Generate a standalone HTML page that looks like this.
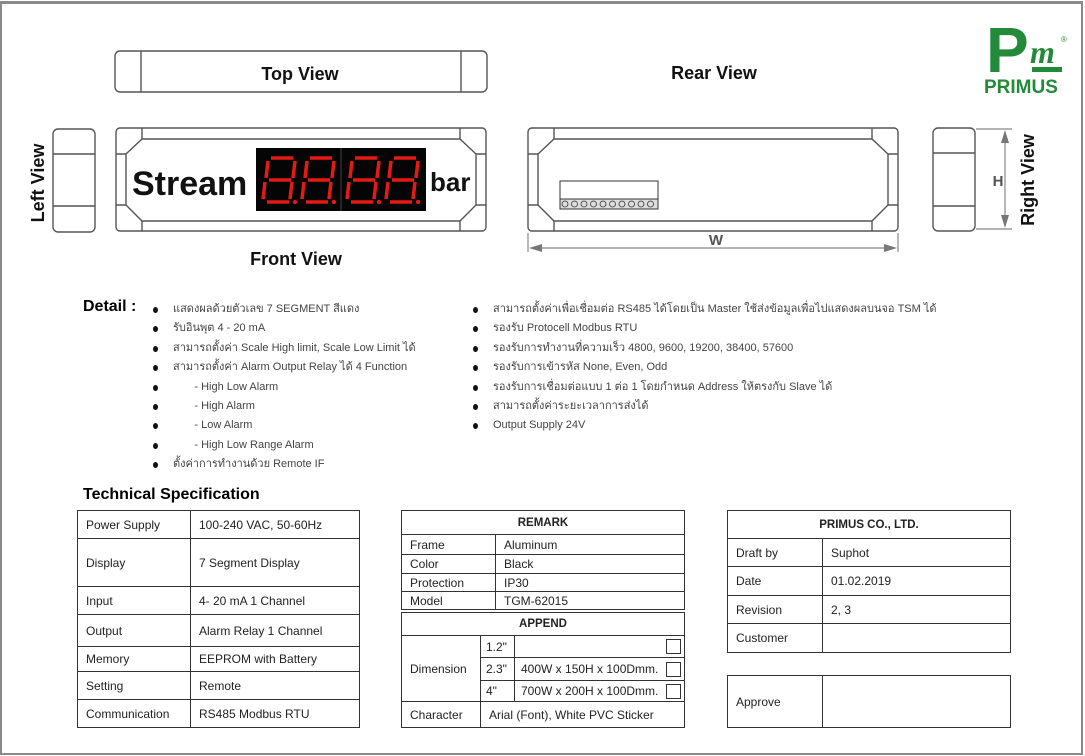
<!DOCTYPE html>
<html><head><meta charset="utf-8">
<style>
*{margin:0;padding:0;box-sizing:border-box}
body{width:1085px;height:756px;background:#fff;position:relative;overflow:hidden;font-family:"Liberation Sans",Arial,sans-serif;color:#111}
.frame{position:absolute;left:0;top:1px;width:1083px;height:754px;border:2px solid #8a8a8a;border-top-width:3px}
svg{position:absolute;left:0;top:0}
.det{position:absolute;font-size:11px;color:#444;line-height:19.4px;font-family:"Liberation Sans","DejaVu Sans",sans-serif}
.det div{position:relative;height:19.4px;white-space:nowrap}
.det div:before{content:"";position:absolute;left:-20px;top:7px;width:5px;height:6px;border-radius:50%;background:#111}
h3{position:absolute;font-size:16px;font-weight:bold;color:#000}
table{position:absolute;border-collapse:collapse;font-size:12px;color:#222}
td{border:1px solid #333;padding:0 0 0 8px;vertical-align:middle;white-space:nowrap}
.c{text-align:center;padding:0;font-weight:bold;font-size:11.5px}
.box{display:inline-block;width:15px;height:15px;border:1px solid #333;float:right;margin-right:3px}
</style></head><body>
<div class="frame"></div>
<svg width="1085" height="300" viewBox="0 0 1085 300">
<defs>
<g id="dig" fill="none" stroke="#e41b13" stroke-width="3.5">
<path d="M8 2H30M32 5L30 22M29 26L27 43M4 46H26M2 26L0 43M5 5L3 22M6 24H28"/>
<circle cx="32" cy="46" r="2.2" fill="#e41b13" stroke="none"/>
</g>
</defs>
<g fill="none" stroke="#555" stroke-width="1.4">
<rect x="115" y="51" width="372" height="41" rx="5"/>
<path d="M141 51V92M461 51V92"/>
<rect x="53" y="129" width="42" height="103" rx="5"/>
<path d="M53 154H95M53 206H95"/>
<rect x="933" y="128" width="42" height="103" rx="5"/>
<path d="M933 153H975M933 206H975"/>
<rect x="116" y="128" width="370" height="103" rx="4"/>
<path d="M142 139H460L476 154V205L460 221H142L126 205V154Z"/>
<path d="M142 128V139M116 154H126M460 128V139M476 154H486M116 205H126M142 221V231M476 205H486M460 221V231"/>
<rect x="528" y="128" width="370" height="103" rx="4"/>
<path d="M554 139H872L888 154V205L872 221H554L538 205V154Z"/>
<path d="M554 128V139M528 154H538M872 128V139M888 154H898M528 205H538M554 221V231M888 205H898M872 221V231"/>
</g>
<rect x="560" y="181" width="98" height="28" fill="#fff" stroke="#333" stroke-width="1"/>
<rect x="560" y="199" width="98" height="10" fill="#ddd" stroke="#333" stroke-width="1"/>
<g fill="none" stroke="#333" stroke-width="0.8">
<circle cx="565" cy="204" r="3"/><circle cx="574.5" cy="204" r="3"/><circle cx="584" cy="204" r="3"/><circle cx="593.5" cy="204" r="3"/><circle cx="603" cy="204" r="3"/><circle cx="612.5" cy="204" r="3"/><circle cx="622" cy="204" r="3"/><circle cx="631.5" cy="204" r="3"/><circle cx="641" cy="204" r="3"/><circle cx="650.5" cy="204" r="3"/>
</g>
<rect x="256" y="148" width="170" height="63" fill="#050505"/>
<path d="M341 148V211" stroke="#444" stroke-width="1"/>
<use href="#dig" x="263" y="156"/>
<use href="#dig" x="302" y="156"/>
<use href="#dig" x="347" y="156"/>
<use href="#dig" x="386" y="156"/>
<text x="132" y="195" font-family="Liberation Sans, sans-serif" font-weight="bold" font-size="34" fill="#111">Stream</text>
<text x="430" y="191" font-family="Liberation Sans, sans-serif" font-weight="bold" font-size="26" fill="#111">bar</text>
<g font-family="Liberation Sans, Arial, sans-serif" font-weight="bold" font-size="18" fill="#111" text-anchor="middle">
<text x="300" y="80">Top View</text>
<text x="296" y="265">Front View</text>
<text x="714" y="79">Rear View</text>
<text transform="translate(44,183) rotate(-90)">Left View</text>
<text transform="translate(1034,180) rotate(-90)">Right View</text>
</g>
<g stroke="#888" stroke-width="1.2" fill="#777">
<path d="M528 233V252M898 233V252M532 248H894" fill="none"/>
<path d="M529 248L542 244V252Z M897 248L884 244V252Z" stroke="none"/>
<path d="M976 129H1012M976 229H1012M1005 133V225" fill="none"/>
<path d="M1005 130L1001 143H1009Z M1005 228L1001 215H1009Z" stroke="none"/>
</g>
<text x="716" y="245" font-family="Liberation Sans, sans-serif" font-size="15" font-weight="bold" fill="#555" text-anchor="middle">W</text>
<text x="998" y="186" font-family="Liberation Sans, sans-serif" font-size="15" font-weight="bold" fill="#555" text-anchor="middle">H</text>
<g fill="#238a3a">
<text x="986" y="72" font-family="Liberation Sans, sans-serif" font-weight="bold" font-size="64">P</text>
<text x="1030" y="63" font-family="Liberation Serif, serif" font-weight="bold" font-style="italic" font-size="32">m</text>
<rect x="1032" y="67" width="30" height="5"/>
<text x="984" y="93" font-family="Liberation Sans, sans-serif" font-weight="bold" font-size="19">PRIMUS</text>
<text x="1061" y="42" font-family="Liberation Sans, sans-serif" font-size="8">®</text>
</g>
</svg>

<h3 style="left:83px;top:298px">Detail :</h3>
<div class="det" style="left:173px;top:300px">
<div>แสดงผลด้วยตัวเลข 7 SEGMENT สีแดง</div>
<div>รับอินพุต 4 - 20 mA</div>
<div>สามารถตั้งค่า Scale High limit, Scale Low Limit ได้</div>
<div>สามารถตั้งค่า Alarm Output Relay ได้ 4 Function</div>
<div>&nbsp;&nbsp;&nbsp;&nbsp;&nbsp;&nbsp;&nbsp;- High Low Alarm</div>
<div>&nbsp;&nbsp;&nbsp;&nbsp;&nbsp;&nbsp;&nbsp;- High Alarm</div>
<div>&nbsp;&nbsp;&nbsp;&nbsp;&nbsp;&nbsp;&nbsp;- Low Alarm</div>
<div>&nbsp;&nbsp;&nbsp;&nbsp;&nbsp;&nbsp;&nbsp;- High Low Range Alarm</div>
<div>ตั้งค่าการทำงานด้วย Remote IF</div>
</div>
<div class="det" style="left:493px;top:300px">
<div>สามารถตั้งค่าเพื่อเชื่อมต่อ RS485 ได้โดยเป็น Master ใช้ส่งข้อมูลเพื่อไปแสดงผลบนจอ TSM ได้</div>
<div>รองรับ Protocell Modbus RTU</div>
<div>รองรับการทำงานที่ความเร็ว 4800, 9600, 19200, 38400, 57600</div>
<div>รองรับการเข้ารหัส None, Even, Odd</div>
<div>รองรับการเชื่อมต่อแบบ 1 ต่อ 1 โดยกำหนด Address ให้ตรงกับ Slave ได้</div>
<div>สามารถตั้งค่าระยะเวลาการส่งได้</div>
<div>Output Supply 24V</div>
</div>

<h3 style="left:83px;top:486px">Technical Specification</h3>
<table style="left:77px;top:510px;width:283px">
<tr style="height:28px"><td style="width:113px">Power Supply</td><td>100-240 VAC, 50-60Hz</td></tr>
<tr style="height:48px"><td>Display</td><td>7 Segment Display</td></tr>
<tr style="height:28px"><td>Input</td><td>4- 20 mA 1 Channel</td></tr>
<tr style="height:32px"><td>Output</td><td>Alarm Relay 1 Channel</td></tr>
<tr style="height:25px"><td>Memory</td><td>EEPROM with Battery</td></tr>
<tr style="height:28px"><td>Setting</td><td>Remote</td></tr>
<tr style="height:28px"><td>Communication</td><td>RS485 Modbus RTU</td></tr>
</table>

<table style="left:401px;top:510px;width:284px">
<tr style="height:24px"><td class="c" colspan="2">REMARK</td></tr>
<tr style="height:20px"><td style="width:94px">Frame</td><td>Aluminum</td></tr>
<tr style="height:19px"><td>Color</td><td>Black</td></tr>
<tr style="height:18px"><td>Protection</td><td>IP30</td></tr>
<tr style="height:18px"><td>Model</td><td>TGM-62015</td></tr>
</table>

<table style="left:401px;top:612px;width:284px">
<tr style="height:23px"><td class="c" colspan="3">APPEND</td></tr>
<tr style="height:22px"><td rowspan="3" style="width:79px">Dimension</td><td style="width:34px;padding-left:5px">1.2"</td><td><span class="box"></span></td></tr>
<tr style="height:23px"><td style="padding-left:5px">2.3"</td><td style="padding-left:6px">400W x 150H x 100Dmm.<span class="box"></span></td></tr>
<tr style="height:21px"><td style="padding-left:5px">4"</td><td style="padding-left:6px">700W x 200H x 100Dmm.<span class="box"></span></td></tr>
<tr style="height:26px"><td>Character</td><td colspan="2">Arial (Font), White PVC Sticker</td></tr>
</table>

<table style="left:727px;top:510px;width:284px">
<tr style="height:28px"><td class="c" colspan="2">PRIMUS CO., LTD.</td></tr>
<tr style="height:28px"><td style="width:95px">Draft by</td><td>Suphot</td></tr>
<tr style="height:29px"><td>Date</td><td>01.02.2019</td></tr>
<tr style="height:28px"><td>Revision</td><td>2, 3</td></tr>
<tr style="height:29px"><td>Customer</td><td></td></tr>
</table>

<table style="left:727px;top:675px;width:284px">
<tr style="height:52px"><td style="width:95px">Approve</td><td></td></tr>
</table>
</body></html>
